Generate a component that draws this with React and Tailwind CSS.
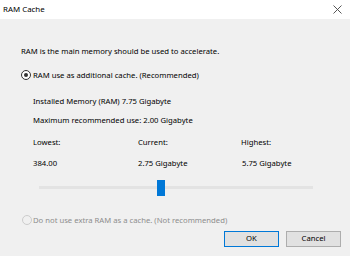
import React from "react";

function Radio({ checked, disabled }) {
  return (
    <span
      className={
        "w-[10px] h-[10px] shrink-0 rounded-full border flex items-center justify-center " +
        (disabled ? "border-[#cccccc] bg-[#f0f0f0]" : "border-[#333333] bg-white")
      }
    >
      {checked && <span className="w-[4px] h-[4px] rounded-full bg-[#333333]"></span>}
    </span>
  );
}

export default function App() {
  return (
    <div className="w-[350px] h-[256px] bg-[#f0f0f0] text-black overflow-hidden flex flex-col font-['Noto_Sans',sans-serif]">
      <div className="h-[19px] bg-white flex items-center justify-between pl-[3px] pr-[8px]">
        <span className="text-[7.9px] leading-none">RAM Cache</span>
        <svg width="9" height="9" viewBox="0 0 9 9" className="text-[#444444]">
          <path d="M0.5 0.5 L8.5 8.5 M8.5 0.5 L0.5 8.5" stroke="currentColor" strokeWidth="0.9" />
        </svg>
      </div>
      <div className="flex flex-col text-[7.7px] leading-[12px]">
        <div className="mt-[26px] pl-[21px] h-[12px]">RAM is the main memory should be used to accelerate.</div>
        <div className="mt-[12px] pl-[21px] h-[12px] flex items-center gap-[2px]">
          <Radio checked />
          <span>RAM use as additional cache. (Recommended)</span>
        </div>
        <div className="mt-[14px] pl-[33px] h-[12px]">Installed Memory (RAM) 7.75 Gigabyte</div>
        <div className="mt-[7px] pl-[33px] h-[12px]">Maximum recommended use: 2.00 Gigabyte</div>
        <div className="mt-[10px] pl-[33px] h-[12px] grid grid-cols-[105px_103px_1fr]">
          <span>Lowest:</span>
          <span>Current:</span>
          <span>Highest:</span>
        </div>
        <div className="mt-[9px] pl-[33px] h-[12px] grid grid-cols-[105px_104px_1fr]">
          <span>384.00</span>
          <span>2.75 Gigabyte</span>
          <span>5.75 Gigabyte</span>
        </div>
        <div className="mt-[10px] h-[16px] pl-[39px] pr-[37px] flex items-center">
          <div className="relative w-full h-[3px] bg-[#e3e3e3]">
            <div className="absolute left-[118px] top-[-6px] w-[8px] h-[16px] bg-[#0078d7]"></div>
          </div>
        </div>
        <div className="mt-[19px] pl-[22px] h-[12px] flex items-center gap-[1px] text-[#8d8d8d]">
          <Radio disabled />
          <span>Do not use extra RAM as a cache. (Not recommended)</span>
        </div>
        <div className="mt-[5px] pr-[9px] flex justify-end gap-[7px]">
          <button className="w-[55px] h-[16px] border border-[#0078d7] bg-[#e1e1e1] text-[7.7px] leading-none">OK</button>
          <button className="w-[55px] h-[16px] border border-[#adadad] bg-[#e1e1e1] text-[7.7px] leading-none">Cancel</button>
        </div>
      </div>
    </div>
  );
}
